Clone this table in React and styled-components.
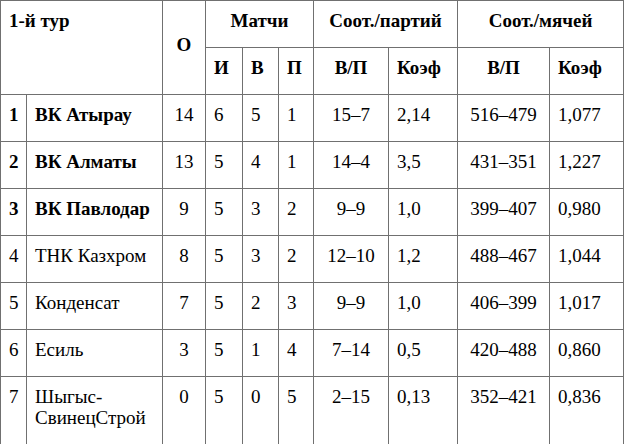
import styled, { createGlobalStyle } from "styled-components";

const GlobalStyle = createGlobalStyle`
  body {
    margin: 0;
    background: #ffffff;
    font-family: "Liberation Serif", "Times New Roman", serif;
    color: #000000;
  }
`;

const Table = styled.table`
  border-collapse: collapse;
  table-layout: fixed;
  width: 624px;
  font-family: "Liberation Serif", "Times New Roman", serif;
  font-size: 19px;
  line-height: 21px;
  color: #000000;
`;

const HeadCell = styled.th`
  border: 1px solid #707070;
  padding: 9px 8px 16px;
  font-family: inherit;
  font-weight: bold;
  text-align: ${(p) => p.$align || "center"};
  vertical-align: ${(p) => p.$valign || "top"};
`;

const Cell = styled.td`
  border: 1px solid #707070;
  padding: 9px 8px 16px;
  font-family: inherit;
  font-weight: ${(p) => (p.$bold ? "bold" : "normal")};
  text-align: ${(p) => p.$align || "left"};
  vertical-align: top;
`;

const widths = [26, 136, 43, 37, 36, 35, 75, 69, 92, 74];

const rows = [
  ["1", "ВК Атырау", "14", "6", "5", "1", "15–7", "2,14", "516–479", "1,077", true],
  ["2", "ВК Алматы", "13", "5", "4", "1", "14–4", "3,5", "431–351", "1,227", true],
  ["3", "ВК Павлодар", "9", "5", "3", "2", "9–9", "1,0", "399–407", "0,980", true],
  ["4", "ТНК Казхром", "8", "5", "3", "2", "12–10", "1,2", "488–467", "1,044"],
  ["5", "Конденсат", "7", "5", "2", "3", "9–9", "1,0", "406–399", "1,017"],
  ["6", "Есиль", "3", "5", "1", "4", "7–14", "0,5", "420–488", "0,860"],
  ["7", "Шыгыс-СвинецСтрой", "0", "5", "0", "5", "2–15", "0,13", "352–421", "0,836"],
];

const aligns = ["left", "left", "center", "left", "left", "left", "center", "left", "center", "left"];

export default function App() {
  return (
    <>
      <GlobalStyle />
      <Table>
        <colgroup>
          {widths.map((w, i) => (
            <col key={i} style={{ width: w }} />
          ))}
        </colgroup>
        <thead>
          <tr>
            <HeadCell colSpan={2} rowSpan={2} $align="left">1-й тур</HeadCell>
            <HeadCell rowSpan={2} $valign="middle">О</HeadCell>
            <HeadCell colSpan={3}>Матчи</HeadCell>
            <HeadCell colSpan={2}>Соот./партий</HeadCell>
            <HeadCell colSpan={2}>Соот./мячей</HeadCell>
          </tr>
          <tr>
            <HeadCell $align="left">И</HeadCell>
            <HeadCell $align="left">В</HeadCell>
            <HeadCell $align="left">П</HeadCell>
            <HeadCell>В/П</HeadCell>
            <HeadCell $align="left">Коэф</HeadCell>
            <HeadCell>В/П</HeadCell>
            <HeadCell $align="left">Коэф</HeadCell>
          </tr>
        </thead>
        <tbody>
          {rows.map((r) => (
            <tr key={r[0]}>
              {r.slice(0, 10).map((v, i) => (
                <Cell key={i} $align={aligns[i]} $bold={r[10] && i < 2}>
                  {v}
                </Cell>
              ))}
            </tr>
          ))}
        </tbody>
      </Table>
    </>
  );
}
